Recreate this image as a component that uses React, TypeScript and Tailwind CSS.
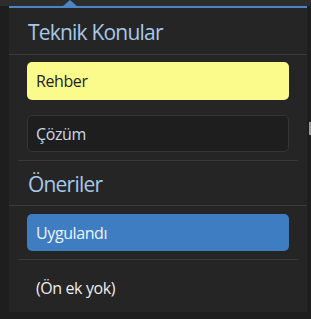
const font = { fontFamily: '"Open Sans", "Noto Sans", sans-serif' };

export default function App() {
  return (
    <div className="relative w-[311px] h-[319px] overflow-hidden bg-[#1e1e1e]" style={font}>
      {/* strip behind the popup */}
      <div className="h-[6px] bg-[#2d2d2d]" />
      {/* arrow */}
      <div className="absolute left-[62px] top-0 w-0 h-0 border-l-[8px] border-r-[8px] border-b-[7px] border-l-transparent border-r-transparent border-b-[#4a86c5]" />
      {/* scrollbar hint */}
      <div className="absolute left-[309px] top-[122px] w-[2px] h-[13px] bg-[#9a9a9a]" />

      <div className="ml-[9px] w-[298px] h-[306px] bg-[#252526] border-t-2 border-[#4a86c5] flex flex-col">
        <div className="h-[46px] shrink-0 flex items-center pt-[3px] pl-[19px] text-[21px] tracking-[-0.8px] text-[#a7c8e8]">Teknik Konular</div>
        <div className="h-px shrink-0 bg-[#3a3a3a]" />

        <div className="flex flex-col gap-[15px] pt-[7px] px-[18px]">
          <div className="h-[38px] rounded-[5px] bg-[#fbfb8c] flex items-center pl-[9px] text-[16px] tracking-[-0.4px] text-[#222]">
            Rehber
          </div>
          <div className="h-[37px] rounded-[5px] bg-[#1e1e1e] border border-[#353535] flex items-center pl-[8px] text-[16px] tracking-[-0.4px] text-[#c9d9e8]">
            Çözüm
          </div>
        </div>
        <div className="mt-[8px] mx-[9px] h-px shrink-0 bg-[#3a3a3a]" />

        <div className="h-[44px] shrink-0 flex items-center pt-[3px] pl-[19px] text-[21px] tracking-[-0.8px] text-[#a7c8e8]">Öneriler</div>
        <div className="h-px shrink-0 bg-[#3a3a3a]" />

        <div className="pt-[8px] px-[18px]">
          <div className="h-[37px] rounded-[5px] bg-[#3f7dc2] flex items-center pl-[9px] text-[16px] tracking-[-0.4px] text-[#eef4fb]">
            Uygulandı
          </div>
        </div>
        <div className="mt-[8px] mx-[9px] h-px shrink-0 bg-[#3a3a3a]" />

        <div className="h-[52px] flex items-center pt-[4px] pl-[27px] text-[16px] tracking-[-0.4px] text-[#eeeeee]">(Ön ek yok)</div>
      </div>
    </div>
  );
}
